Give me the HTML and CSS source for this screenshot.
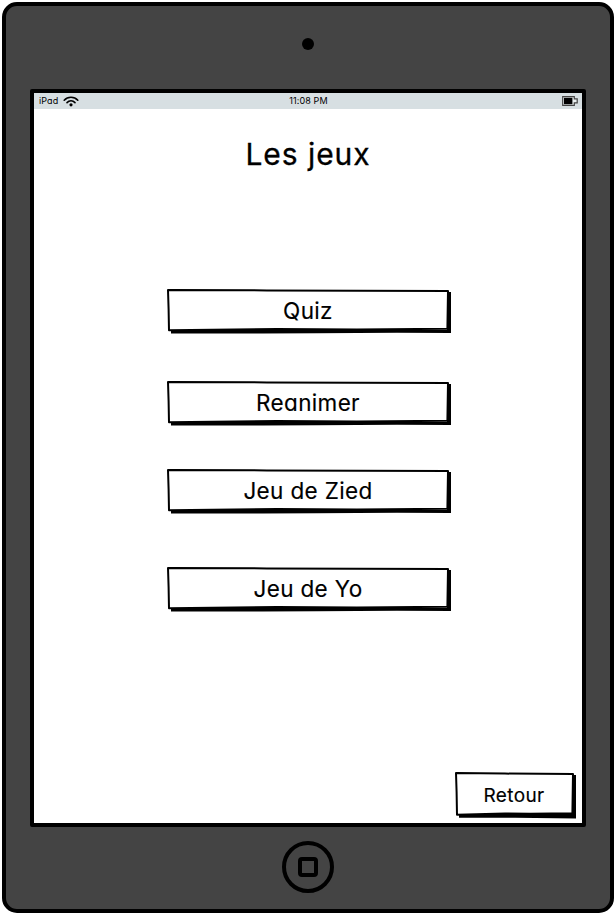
FILE: index.html
```
<!DOCTYPE html>
<html lang="fr">
<head>
<meta charset="utf-8">
<title>Les jeux</title>
<link rel="stylesheet" href="styles.css">
</head>
<body>
<svg class="defs" width="0" height="0" aria-hidden="true">
  <symbol id="wide" viewBox="0 0 284 46">
    <path d="M4 41H280V3H284V44L230 43.7L150 44.2L95 44.6H4Z"/>
    <path class="face" d="M1 1L100 1.4L281 2L280.4 39.8L190 40.4L110 40.1L2 41.2L1.6 20Z"/>
  </symbol>
  <symbol id="small" viewBox="0 0 121 47">
    <path d="M4 42H117V3H121V46.5L60 45.8H4Z"/>
    <path class="face" d="M1 1L50 1.6L118 2L117.4 41.2L75 41.8L50 41.4L2 42.8L1.6 20Z"/>
  </symbol>
</svg>
<div class="tablet">
  <div class="camera"></div>
  <main class="screen">
    <header class="status">
      <span class="network"><span class="carrier">iPad</span>
        <svg class="wifi" width="16" height="11" viewBox="0 0 16 11"><path d="M1.2 4.2C4.8.2 11.2.2 14.8 4.2M4 6.6C6.2 4.2 9.8 4.2 12 6.6"/><circle cx="8" cy="8.8" r="1.6"/></svg>
      </span>
      <time class="clock">11:08 PM</time>
      <svg class="battery" width="16" height="10" viewBox="0 0 16 10"><path class="shell" d="M.7.7H12.3V2.8H15.2V6.8H12.3V9.3H.7Z"/><path d="M2 1.8H10.4V8.2H2Z"/></svg>
    </header>
    <h1 class="title">Les jeux</h1>
    <nav class="games">
      <button class="btn quiz"><svg class="frame"><use href="#wide"/></svg><span class="label">Quiz</span></button>
      <button class="btn reanimer"><svg class="frame"><use href="#wide"/></svg><span class="label">Reanimer</span></button>
      <button class="btn zied"><svg class="frame"><use href="#wide"/></svg><span class="label">Jeu de Zied</span></button>
      <button class="btn yo"><svg class="frame"><use href="#wide"/></svg><span class="label">Jeu de Yo</span></button>
    </nav>
    <button class="btn back"><svg class="frame"><use href="#small"/></svg><span class="label">Retour</span></button>
  </main>
  <div class="home"><div class="home-square"></div></div>
</div>
</body>
</html>
```
FILE: styles.css
```
* { box-sizing: border-box; }
body {
  margin: 0;
  padding: 2px;
  background: #fff;
  color: #000;
  font-family: Inter, "Liberation Sans", sans-serif;
  font-feature-settings: "cv11";
}
.defs { display: block; width: 0; height: 0; }
.tablet {
  width: 612px;
  height: 911px;
  border: 4px solid #000;
  border-radius: 15px;
  background: #444;
  display: flex;
  flex-direction: column;
  align-items: center;
}
.camera {
  width: 12px;
  height: 12px;
  margin: 32px 0 39px;
  border-radius: 50%;
  background: #000;
}
.screen {
  width: 556px;
  height: 738px;
  border: 4px solid #000;
  border-radius: 2px;
  background: #fff;
  display: flex;
  flex-direction: column;
  align-items: center;
}
.status {
  width: 100%;
  height: 16px;
  padding: 0 4px 0 5px;
  background: #d7dfe2;
  display: grid;
  grid-template-columns: 1fr auto 1fr;
  align-items: center;
  font-size: 9px;
  line-height: 16px;
  letter-spacing: 0.1px;
}
.network { display: flex; align-items: center; gap: 5px; }
.wifi path { fill: none; stroke: #000; stroke-width: 1.6; stroke-linecap: round; }
.battery { justify-self: end; }
.battery .shell { fill: #e8eeee; stroke: #444; stroke-width: 1.2; }
.title {
  margin: 25px 0 0;
  font-size: 30px;
  line-height: 40px;
  font-weight: 400;
  letter-spacing: 0.95px;
  -webkit-text-stroke: 0.3px #000;
}
.games { display: flex; flex-direction: column; margin: 115px 0 0 2px; }
.btn {
  display: grid;
  place-items: center;
  padding: 0;
  border: 0;
  background: none;
  color: inherit;
  font: inherit;
  font-feature-settings: inherit;
  font-size: 22.5px;
  width: 284px;
  height: 46px;
}
.frame { grid-area: 1 / 1; width: 100%; height: 100%; }
.face { fill: #fff; stroke: #000; stroke-width: 2; stroke-linejoin: round; }
.label {
  grid-area: 1 / 1;
  line-height: 28px;
  margin: 0 2px 2px 0;
  letter-spacing: 0.35px;
  -webkit-text-stroke: 0.15px #000;
}
.reanimer { margin-top: 46px; }
.zied { margin-top: 42px; }
.yo { margin-top: 52px; }
.back {
  width: 121px;
  height: 47px;
  margin: auto 6px 4px auto;
  font-size: 19px;
}
.back .label { margin: 1px 3px 0 0; }
.home {
  width: 52px;
  height: 52px;
  margin-top: 14px;
  border: 4px solid #000;
  border-radius: 50%;
  display: grid;
  place-items: center;
}
.home-square {
  width: 20px;
  height: 20px;
  border: 4px solid #000;
  border-radius: 4px;
}
```
